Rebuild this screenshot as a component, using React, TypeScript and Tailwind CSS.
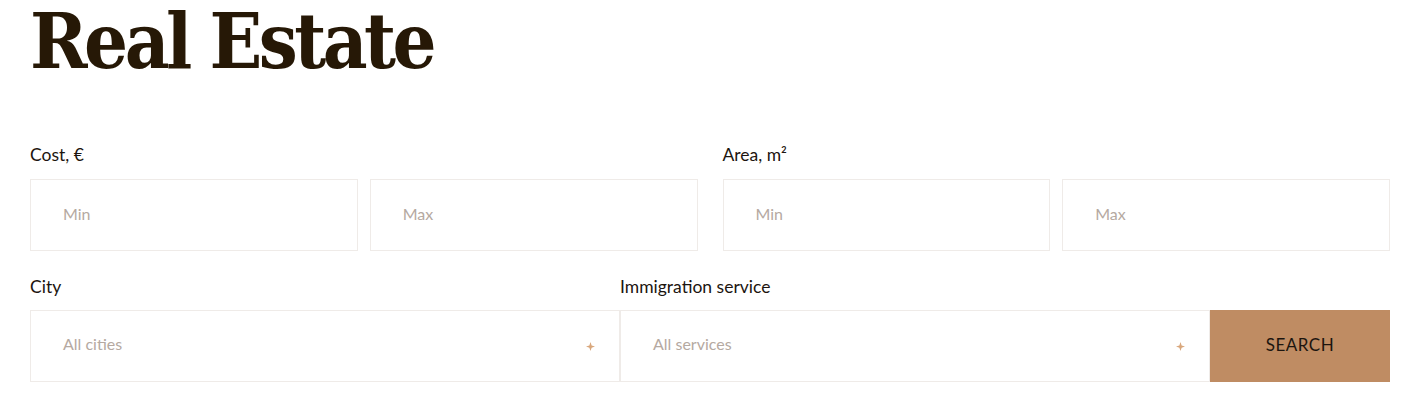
import React from "react";

const Plus = () => (
  <svg width="9" height="9" viewBox="0 0 8 8" className="shrink-0">
    <path d="M4 0 L5 3 L8 4 L5 5 L4 8 L3 5 L0 4 L3 3 Z" fill="#d9a77c" />
  </svg>
);

const Field = ({ placeholder }: { placeholder: string }) => (
  <div className="h-[72px] flex-1 border border-[#efebe8] flex items-center pl-[32px] pb-[3px] text-[16px] text-[#b5a9a1]">
    {placeholder}
  </div>
);

const Select = ({ placeholder }: { placeholder: string }) => (
  <div className="h-[72px] flex-1 border border-[#efebe8] flex items-center justify-between pl-[32px] pr-[24px] text-[16px] text-[#b5a9a1]">
    <span className="pb-[4px]">{placeholder}</span>
    <Plus />
  </div>
);

export default function App() {
  return (
    <div className="w-[1425px] h-[416px] bg-white px-[30px] overflow-hidden" style={{ fontFamily: "Lato, 'Open Sans', sans-serif" }}>
      <h1
        className="text-[77px] font-bold leading-[82px] h-[82px] text-[#261806] font-stretch-condensed tracking-[-3.5px]"
        style={{ fontFamily: "'DejaVu Serif', 'Liberation Serif', serif" }}
      >
        Real Estate
      </h1>
      <div className="w-[1360px] mt-[64px] flex gap-[25px]">
        <div className="flex-1 flex flex-col">
          <div className="text-[17.5px] text-[#1c150f] leading-none h-[33px]">Cost, €</div>
          <div className="flex gap-[12px]">
            <Field placeholder="Min" />
            <Field placeholder="Max" />
          </div>
        </div>
        <div className="flex-1 flex flex-col">
          <div className="text-[17.5px] text-[#1c150f] leading-none h-[33px]">Area, m²</div>
          <div className="flex gap-[12px]">
            <Field placeholder="Min" />
            <Field placeholder="Max" />
          </div>
        </div>
      </div>
      <div className="w-[1360px] mt-[27px] flex">
        <div className="w-[590px] flex flex-col">
          <div className="text-[17.5px] text-[#1c150f] leading-none h-[32px]">City</div>
          <Select placeholder="All cities" />
        </div>
        <div className="w-[590px] flex flex-col">
          <div className="text-[17.5px] text-[#1c150f] leading-none h-[32px]">Immigration service</div>
          <Select placeholder="All services" />
        </div>
        <div className="w-[180px] flex flex-col">
          <div className="h-[32px]" />
          <button className="h-[72px] bg-[#bf8c63] text-[17px] text-[#1c150f] tracking-[0.5px] pb-[3px]">SEARCH</button>
        </div>
      </div>
    </div>
  );
}
